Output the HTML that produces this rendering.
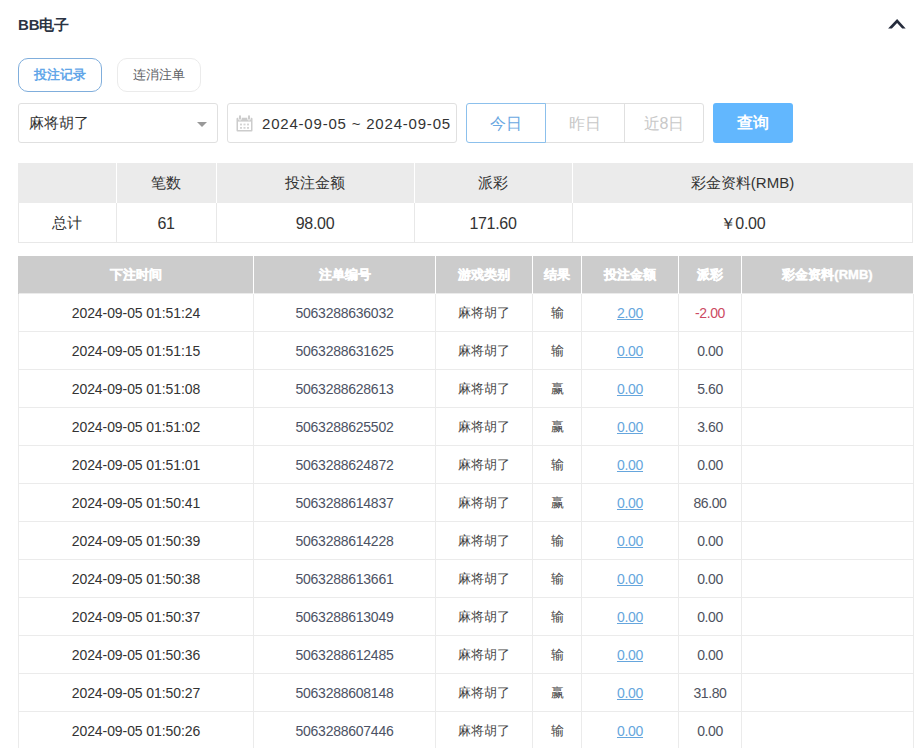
<!DOCTYPE html>
<html><head><meta charset="utf-8">
<style>
*{box-sizing:border-box;margin:0;padding:0}
html,body{width:915px;height:748px;overflow:hidden;background:#fff}
body{font-family:"Liberation Sans",sans-serif;color:#333;position:relative}
.abs{position:absolute}
.title{left:18px;top:16px;font-size:15px;letter-spacing:-0.1px;font-weight:bold;color:#2c3443;line-height:18px}
.chev{left:886px;top:16px;width:22px;height:16px}
.tab{top:58px;height:34px;border-radius:10px;font-size:13px;line-height:32px;text-align:center}
.tab1{left:18px;width:84px;border:1px solid #80aedc;color:#62a6e8;font-weight:bold}
.tab2{left:117px;width:84px;border:1px solid #ebebeb;color:#606266}
.sel{left:18px;top:103px;width:200px;height:40px;border:1px solid #e0e0e0;border-radius:3px;font-size:15px;line-height:38px;padding-left:10px;color:#333}
.tri{left:197px;top:122px;width:0;height:0;border-left:5px solid transparent;border-right:5px solid transparent;border-top:5px solid #999}
.date{left:227px;top:103px;width:230px;height:40px;border:1px solid #e0e0e0;border-radius:3px;font-size:15px;letter-spacing:0.8px;line-height:40px;padding-left:34px;color:#333}
.cal{left:236px;top:115px;width:17px;height:17px}
.bg{top:103px;height:40px;font-size:16px;line-height:40px;text-align:center;border:1px solid #e0e0e0}
.b1{left:466px;width:80px;border-color:#8cc0ec;color:#6aa8e2;border-radius:3px 0 0 3px;z-index:2}
.b2{left:545px;width:80px;color:#c8c8c8}
.b3{left:624px;width:80px;color:#c8c8c8;border-radius:0 3px 3px 0}
.q{left:713px;top:103px;width:80px;height:40px;border-radius:3px;background:#62b7fe;color:#fff;font-size:16px;font-weight:bold;line-height:40px;text-align:center}
table{border-collapse:collapse;table-layout:fixed;position:absolute}
.vl{width:1px;background:#e8e8e8}
.sh{top:163px;height:40px;line-height:40px;text-align:center;font-size:15px;color:#333}
.sr{top:203px;height:39px;line-height:42px;text-align:center;font-size:16px;letter-spacing:-0.3px;color:#333}
.sr.c{font-size:15px;letter-spacing:0;line-height:40px}
.det{left:18px;top:256px;width:895px}
.det th{background:#ccc;color:#fff;font-weight:bold;font-size:13px;height:37px;padding-top:2px;-webkit-text-stroke:0.4px #fff;border-left:1px solid #fff;border-right:1px solid #fff}
.det th:first-child{border-left:1px solid #ccc}
.det th:last-child{border-right:1px solid #fff}
.det td{border:1px solid #ebebeb;height:38px;padding-top:2px;text-align:center;font-size:14px;color:#333;letter-spacing:-0.08px}
.det td.no{color:#4c5264;letter-spacing:-0.25px}
.det td.g{color:#444;font-size:13px}
.det td a{color:#66a6dd;text-decoration:underline;letter-spacing:-0.3px}
.det td.red{color:#cc4a62;letter-spacing:-0.4px}
.det td.n{color:#4e5260;letter-spacing:-0.4px}
</style></head><body>
<div class="abs title">BB<span style="font-size:14.5px">电子</span></div>
<svg class="abs" style="left:880px;top:10px" width="35" height="30" viewBox="880 10 35 30"><polygon points="888.1,28.5 897.1,19.0 905.7,28.5 902.2,28.5 897.1,22.9 891.9,28.5" fill="#262c3c"/></svg>
<div class="abs tab tab1">投注记录</div>
<div class="abs tab tab2">连消注单</div>
<div class="abs sel">麻将胡了</div>
<div class="abs tri"></div>
<div class="abs date">2024-09-05 ~ 2024-09-05</div>
<svg class="abs" style="left:232px;top:110px" width="26" height="26" viewBox="232 110 26 26"><rect x="236.5" y="117.8" width="16" height="13.7" rx="1" fill="#ccc"/><rect x="238" y="121.6" width="13" height="8.4" fill="#fff"/><rect x="238.3" y="114.6" width="3.4" height="5.8" rx="1.7" fill="#fff"/><rect x="247.3" y="114.6" width="3.4" height="5.8" rx="1.7" fill="#fff"/><rect x="239" y="115.2" width="2" height="4.6" rx="1" fill="#ccc"/><rect x="248" y="115.2" width="2" height="4.6" rx="1" fill="#ccc"/><g fill="#d4d4d4"><rect x="240" y="123.6" width="2" height="1.8"/><rect x="243.5" y="123.6" width="2" height="1.8"/><rect x="247" y="123.6" width="2" height="1.8"/><rect x="240" y="127" width="2" height="1.8"/><rect x="243.5" y="127" width="2" height="1.8"/><rect x="247" y="127" width="2" height="1.8"/></g></svg>
<div class="abs bg b2">昨日</div>
<div class="abs bg b3">近8日</div>
<div class="abs bg b1">今日</div>
<div class="abs q">查询</div>

<div class="abs" style="left:18px;top:163px;width:895px;height:40px;background:#ebebeb"></div>
<div class="abs vl" style="left:116px;top:163px;height:40px;background:#fff"></div>
<div class="abs vl" style="left:216px;top:163px;height:40px;background:#fff"></div>
<div class="abs vl" style="left:414px;top:163px;height:40px;background:#fff"></div>
<div class="abs vl" style="left:572px;top:163px;height:40px;background:#fff"></div>
<div class="abs vl" style="left:18px;top:203px;height:40px"></div>
<div class="abs vl" style="left:116px;top:203px;height:40px"></div>
<div class="abs vl" style="left:216px;top:203px;height:40px"></div>
<div class="abs vl" style="left:414px;top:203px;height:40px"></div>
<div class="abs vl" style="left:572px;top:203px;height:40px"></div>
<div class="abs vl" style="left:912px;top:203px;height:40px"></div>
<div class="abs" style="left:18px;top:242px;width:895px;height:1px;background:#e8e8e8"></div>
<div class="abs sh" style="left:116px;width:100px">笔数</div>
<div class="abs sh" style="left:216px;width:198px">投注金额</div>
<div class="abs sh" style="left:414px;width:158px">派彩</div>
<div class="abs sh" style="left:572px;width:341px">彩金资料(RMB)</div>
<div class="abs sr c" style="left:18px;width:98px">总计</div>
<div class="abs sr" style="left:116px;width:100px">61</div>
<div class="abs sr" style="left:216px;width:198px">98.00</div>
<div class="abs sr" style="left:414px;width:158px">171.60</div>
<div class="abs sr" style="left:572px;width:341px">￥0.00</div>

<table class="det">
<colgroup><col style="width:235px"><col style="width:182px"><col style="width:97px"><col style="width:49px"><col style="width:97px"><col style="width:63px"><col style="width:172px"></colgroup>
<tr><th>下注时间</th><th>注单编号</th><th>游戏类别</th><th>结果</th><th>投注金额</th><th>派彩</th><th>彩金资料(RMB)</th></tr>
<tr><td>2024-09-05 01:51:24</td><td class="no">5063288636032</td><td class="g">麻将胡了</td><td class="g">输</td><td><a>2.00</a></td><td class="red">-2.00</td><td></td></tr>
<tr><td>2024-09-05 01:51:15</td><td class="no">5063288631625</td><td class="g">麻将胡了</td><td class="g">输</td><td><a>0.00</a></td><td class="n">0.00</td><td></td></tr>
<tr><td>2024-09-05 01:51:08</td><td class="no">5063288628613</td><td class="g">麻将胡了</td><td class="g">赢</td><td><a>0.00</a></td><td class="n">5.60</td><td></td></tr>
<tr><td>2024-09-05 01:51:02</td><td class="no">5063288625502</td><td class="g">麻将胡了</td><td class="g">赢</td><td><a>0.00</a></td><td class="n">3.60</td><td></td></tr>
<tr><td>2024-09-05 01:51:01</td><td class="no">5063288624872</td><td class="g">麻将胡了</td><td class="g">输</td><td><a>0.00</a></td><td class="n">0.00</td><td></td></tr>
<tr><td>2024-09-05 01:50:41</td><td class="no">5063288614837</td><td class="g">麻将胡了</td><td class="g">赢</td><td><a>0.00</a></td><td class="n">86.00</td><td></td></tr>
<tr><td>2024-09-05 01:50:39</td><td class="no">5063288614228</td><td class="g">麻将胡了</td><td class="g">输</td><td><a>0.00</a></td><td class="n">0.00</td><td></td></tr>
<tr><td>2024-09-05 01:50:38</td><td class="no">5063288613661</td><td class="g">麻将胡了</td><td class="g">输</td><td><a>0.00</a></td><td class="n">0.00</td><td></td></tr>
<tr><td>2024-09-05 01:50:37</td><td class="no">5063288613049</td><td class="g">麻将胡了</td><td class="g">输</td><td><a>0.00</a></td><td class="n">0.00</td><td></td></tr>
<tr><td>2024-09-05 01:50:36</td><td class="no">5063288612485</td><td class="g">麻将胡了</td><td class="g">输</td><td><a>0.00</a></td><td class="n">0.00</td><td></td></tr>
<tr><td>2024-09-05 01:50:27</td><td class="no">5063288608148</td><td class="g">麻将胡了</td><td class="g">赢</td><td><a>0.00</a></td><td class="n">31.80</td><td></td></tr>
<tr><td>2024-09-05 01:50:26</td><td class="no">5063288607446</td><td class="g">麻将胡了</td><td class="g">输</td><td><a>0.00</a></td><td class="n">0.00</td><td></td></tr>
</table>
</body></html>
